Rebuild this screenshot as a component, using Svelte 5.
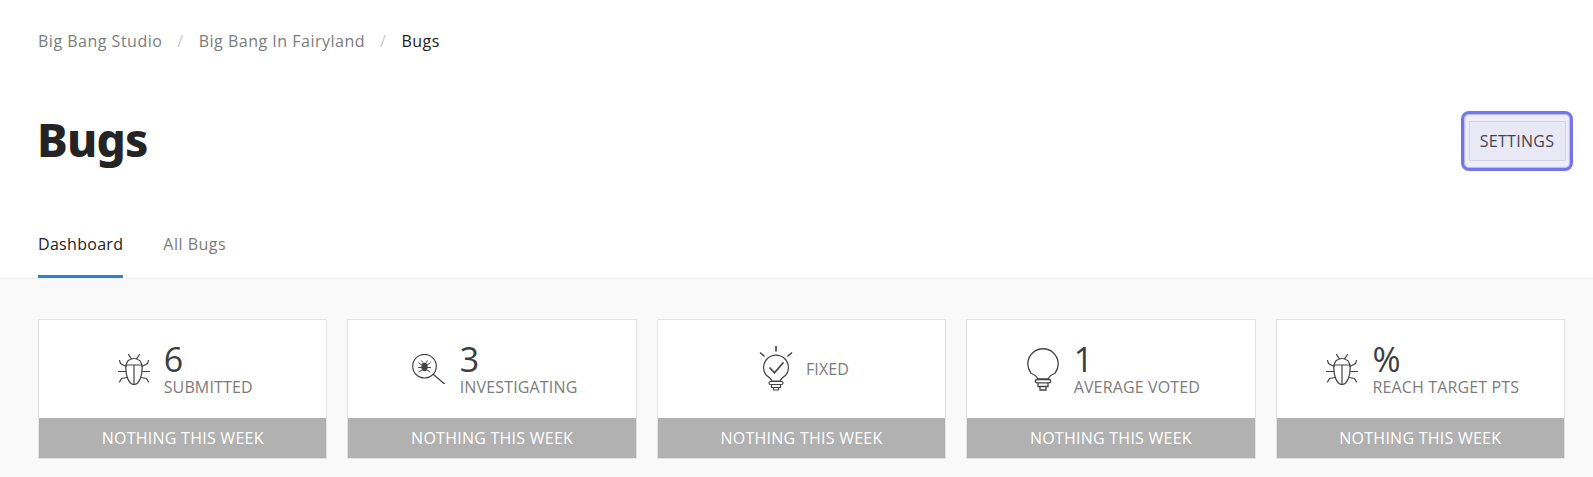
<script>
  const cards = [
    { icon: 'bug', value: '6', label: 'SUBMITTED' },
    { icon: 'search', value: '3', label: 'INVESTIGATING' },
    { icon: 'fixed', value: '', label: 'FIXED' },
    { icon: 'bulb', value: '1', label: 'AVERAGE VOTED' },
    { icon: 'bug', value: '%', label: 'REACH TARGET PTS' }
  ];
</script>

<div class="page">
  <header class="head">
    <nav class="crumbs">
      <span>Big Bang Studio</span><i>/</i><span>Big Bang In Fairyland</span><i>/</i><span class="now">Bugs</span>
    </nav>
    <div class="title-row">
      <h1>Bugs</h1>
      <button class="settings"><span>SETTINGS</span></button>
    </div>
    <div class="tabs">
      <span class="tab active">Dashboard</span>
      <span class="tab">All Bugs</span>
    </div>
  </header>
  <main class="body">
    <div class="grid">
      {#each cards as c}
        <section class="card">
          <div class="top">
            <div class="in" class:solo={!c.value}>
              {#if c.icon === 'bug'}
                <svg class="ico bug" width="32" height="31" viewBox="0 0 32 31" fill="none" stroke="#444" stroke-width="1.200" stroke-linecap="round">
                  <path d="M16 4.500C11 4.500 7.800 7.500 7.800 14c0 9 3.500 16.500 8.200 16.500S24.200 23 24.200 14c0-6.500-3.200-9.500-8.200-9.500z" />
                  <path d="M8 11h16M16 11v19.500M13.500 4.800L10.500 .5M18.500 4.800L21.500 .5M8 12.500L2.500 9.500 1.500 6.500M24 12.500l5.500-3 1-3M7.800 17.500H.5M24.200 17.500h7.300M9 23.500L3.500 24.500 1.500 28M23 23.500l5.500 1 2 3.500" />
                </svg>
              {:else if c.icon === 'search'}
                <svg class="ico" width="33" height="30" viewBox="0 0 33 30" fill="none" stroke="#444" stroke-width="1.200" stroke-linecap="round">
                  <circle cx="12.500" cy="12.200" r="11.800" />
                  <path d="M21.500 20.500L32.500 30" stroke-width="1.300" />
                  <ellipse cx="12.500" cy="13" rx="3.200" ry="4.200" fill="#444" stroke="none" />
                  <path d="M6.800 9l3 2M18.200 9l-3 2M6.500 13.500h3M18.500 13.500h-3M7 18l3-2M18 18l-3-2M10.800 8.500l-1-1.500M14.200 8.500l1-1.500" stroke-width="1" />
                </svg>
              {:else if c.icon === 'fixed'}
                <svg class="ico" width="34" height="46" viewBox="0 0 34 46" fill="none" stroke="#444" stroke-width="1.200" stroke-linecap="round">
                  <path d="M17 .5V5M1.500 7l3.500 3M32.500 7L29 10" stroke-width="1.600" />
                  <path d="M12.500 35c0-2.500-2-3.500-5-5.500A12.400 12.400 0 1 1 26.500 29.500c-3 2-5 3-5 5.500z" />
                  <path d="M11.500 35.500h11a1.200 1.200 0 0 1 0 3h-11a1.200 1.200 0 0 1 0-3zM12.500 38.500v3h9v-3M14.500 41.500v2.500h5v-2.500" />
                  <path d="M11 22l4.500 4.800L24 17" stroke-width="1.700" />
                </svg>
              {:else}
                <svg class="ico" width="32" height="43" viewBox="0 0 32 43" fill="none" stroke="#444" stroke-width="1.300" stroke-linecap="round">
                  <path d="M10.500 31c0-2.500-2.500-4-6.700-6A15.200 15.200 0 1 1 28.200 25c-4.200 2-6.700 3.500-6.700 6z" />
                  <path d="M10 31.500h12a1.700 1.700 0 0 1 0 3.400H10a1.700 1.700 0 0 1 0-3.400zM11 35v3.500h10V35M13 38.500v3.500h6v-3.500" />
                </svg>
              {/if}
              <div class="txt">
                {#if c.value}<div class="val">{c.value}</div>{/if}
                <div class="lab">{c.label}</div>
              </div>
            </div>
          </div>
          <div class="foot">NOTHING THIS WEEK</div>
        </section>
      {/each}
    </div>
  </main>
</div>

<style>
  :global(body) { margin: 0; background: #f9f9f9; }
  .page { font-family: "Open Sans", "Noto Sans", sans-serif; height: 477px; overflow: hidden; background: #f9f9f9; }
  .head { background: #fff; border-bottom: 1px solid #eee; padding: 0 28px 0 38px; height: 278px; box-sizing: content-box; }
  .crumbs { display: flex; align-items: center; padding-top: 30px; height: 22px; font-size: 16px; letter-spacing: .5px; line-height: 22px; color: #7c7c7c; }
  .crumbs i { font-style: normal; color: #c8c8c8; margin: 0 15px; }
  .crumbs .now { color: #222; }
  .title-row { display: flex; justify-content: space-between; align-items: center; height: 40px; margin-top: 69px; }
  h1 { margin: 0 0 4px -1px; font-family: "Noto Sans", sans-serif; font-size: 46px; font-weight: 800; color: #242424; letter-spacing: -.8px; line-height: 40px; }
  .settings { flex: none; width: 112px; height: 60px; box-sizing: border-box; margin: -10px -8px -10px -7px; padding: 0; display: flex; align-items: center; justify-content: center; font: 16px "Open Sans", sans-serif; letter-spacing: .3px; color: #44444f; background: #eeeefa; border: 3px solid #7375ea; border-radius: 8px; box-shadow: inset 0 0 1px 1px rgba(115, 117, 234, .45); }
  .settings span { box-sizing: border-box; width: 97px; height: 40px; line-height: 38px; text-align: center; background: #e9e9f5; border: 1px solid #d2d2e0; }
  .tabs { display: flex; gap: 40px; margin-top: 65px; }
  .tab { height: 52px; line-height: 36px; font-size: 16px; letter-spacing: .3px; color: #7c7c7c; box-sizing: border-box; }
  .tab:last-child { letter-spacing: .5px; }
  .tab.active { color: #222; border-bottom: 3px solid #3182ce; }
  .body { padding: 40px 28px 0 38px; }
  .grid { display: grid; grid-template-columns: repeat(5, 1fr); gap: 20px; }
  .card { border: 1px solid #e2e2e2; background: #fff; height: 140px; box-sizing: border-box; display: flex; flex-direction: column; }
  .top { flex: 1; display: flex; justify-content: center; align-items: center; }
  .in { display: flex; align-items: center; gap: 15px; padding-left: 5px; }
  .in.solo { gap: 13px; }
  .ico { flex: none; }
  .ico.bug { margin-right: -1px; }
  .txt { display: flex; flex-direction: column; }
  .val { font-size: 34px; line-height: 36px; color: #3e3e3e; }
  .lab { font-size: 16px; line-height: 20px; letter-spacing: .15px; color: #7c7c7c; }
  .foot { height: 40px; background: #b1b1b1; color: #fff; font-size: 16px; letter-spacing: .25px; line-height: 40px; text-align: center; }
</style>
